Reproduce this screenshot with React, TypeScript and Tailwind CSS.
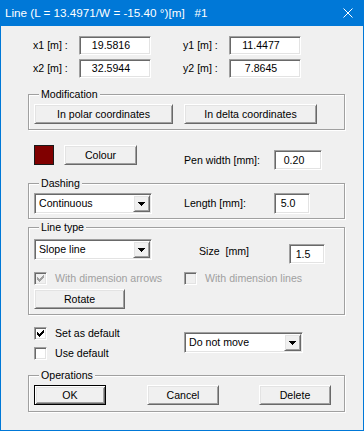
import React from 'react';

const raised =
  'flex items-center justify-center bg-[#f0f0f0] border border-t-white border-l-white border-r-[#696969] border-b-[#696969] shadow-[inset_1px_1px_0_#e3e3e3,inset_-1px_-1px_0_#a0a0a0]';
const sunken =
  'border border-t-[#a0a0a0] border-l-[#a0a0a0] border-r-white border-b-white shadow-[inset_1px_1px_0_#696969,inset_-1px_-1px_0_#e3e3e3]';

function Button({ w, children, isDefault }: { w: string; children: React.ReactNode; isDefault?: boolean }) {
  if (isDefault) {
    return (
      <div
        className={`${w} h-[20px] shrink-0 flex items-center justify-center bg-[#f0f0f0] border border-black shadow-[inset_1px_1px_0_#fff,inset_-1px_-1px_0_#696969,inset_2px_2px_0_#e3e3e3,inset_-2px_-2px_0_#a0a0a0]`}
      >
        {children}
      </div>
    );
  }
  return <div className={`${w} h-[20px] shrink-0 ${raised}`}>{children}</div>;
}

function Field({ w, h = 'h-[20px]', value }: { w: string; h?: string; value: string }) {
  return (
    <div className={`${w} ${h} shrink-0 bg-white flex items-center justify-center pr-[8px] ${sunken}`}>{value}</div>
  );
}

function Combo({ w, value }: { w: string; value: string }) {
  return (
    <div className={`${w} h-[21px] shrink-0 bg-white flex ${sunken}`}>
      <span className="flex-1 flex items-center pl-[4px]">{value}</span>
      <span className={`w-[17px] my-[1px] mr-[1px] ${raised}`}>
        <svg width="7" height="4" viewBox="0 0 7 4" shapeRendering="crispEdges">
          <polygon points="0,0 7,0 3.5,4" fill="#000" />
        </svg>
      </span>
    </div>
  );
}

function Check({ checked, disabled }: { checked?: boolean; disabled?: boolean }) {
  return (
    <span
      className={`w-[13px] h-[13px] shrink-0 flex items-center justify-center ${sunken} ${disabled ? 'bg-[#f0f0f0]' : 'bg-white'}`}
    >
      {checked && (
        <svg width="7" height="7" viewBox="0 0 7 7" shapeRendering="crispEdges" fill={disabled ? '#a0a0a0' : '#000'}>
          <path d="M0 2h1v3H0z M1 3h1v3H1z M2 4h1v3H2z M3 3h1v3H3z M4 2h1v3H4z M5 1h1v3H5z M6 0h1v3H6z" />
        </svg>
      )}
    </span>
  );
}

function Group({ label, className, children }: { label: string; className: string; children: React.ReactNode }) {
  return (
    <div
      className={`relative w-[317px] border border-[#a0a0a0] shadow-[inset_1px_1px_0_#fff,1px_1px_0_#fff] ${className}`}
    >
      <span className="absolute left-[10px] top-[-7px] bg-[#f0f0f0] px-[2px] leading-[13px]">{label}</span>
      {children}
    </div>
  );
}

export default function App() {
  return (
    <div className="w-[364px] h-[431px] flex flex-col bg-[#0078d7] font-['Liberation_Sans',Arial,sans-serif] text-black">
      {/* Title bar */}
      <div className="h-[26px] shrink-0 flex items-center pl-[5px] text-white text-[11.7px]">
        <span className="whitespace-pre">Line (L = 13.4971/W = -15.40 °)[m]   #1</span>
        <svg className="ml-auto mr-[11px]" width="10" height="10" viewBox="0 0 10 10">
          <path d="M0.5 0.5L9.5 9.5M9.5 0.5L0.5 9.5" stroke="#fff" strokeWidth="1" />
        </svg>
      </div>

      {/* Body */}
      <div className="flex-1 mx-[1px] mb-[1px] bg-[#f0f0f0] pl-[27px] pt-[10px] text-[10.6px] leading-[13px]">
        {/* Coordinates */}
        <div className="pl-[5px]">
          <div className="flex items-center">
            <span className="w-[46px]">x1 [m] :</span>
            <Field w="w-[72px]" h="h-[19px]" value="19.5816" />
            <span className="ml-[32px] w-[46px]">y1 [m] :</span>
            <Field w="w-[72px]" h="h-[19px]" value="11.4477" />
          </div>
          <div className="flex items-center mt-[4px]">
            <span className="w-[46px]">x2 [m] :</span>
            <Field w="w-[72px]" h="h-[19px]" value="32.5944" />
            <span className="ml-[32px] w-[46px]">y2 [m] :</span>
            <Field w="w-[72px]" h="h-[19px]" value="7.8645" />
          </div>
        </div>

        {/* Modification */}
        <Group label="Modification" className="mt-[16px] pt-[9px] pb-[5px] pl-[5px]">
          <div className="flex">
            <Button w="w-[139px]">In polar coordinates</Button>
            <Button w="w-[133px] ml-[11px]">In delta coordinates</Button>
          </div>
        </Group>

        {/* Colour / pen width */}
        <div className="flex items-start mt-[15px] pl-[6px]">
          <span className="w-[20px] h-[20px] shrink-0 bg-[#800000] border border-[#1a1a1a]" />
          <Button w="w-[73px] ml-[10px]">Colour</Button>
          <span className="ml-[47px] w-[90px] h-[20px] mt-[5px] flex items-center">Pen width [mm]:</span>
          <div className="mt-[5px]">
            <Field w="w-[48px]" value="0.20" />
          </div>
        </div>

        {/* Dashing */}
        <Group label="Dashing" className="mt-[13px] pt-[9px] pb-[4px] pl-[5px]">
          <div className="flex items-start">
            <Combo w="w-[118px]" value="Continuous" />
            <span className="ml-[32px] w-[90px] h-[21px] flex items-center">Length [mm]:</span>
            <Field w="w-[36px]" h="h-[21px]" value="5.0" />
          </div>
        </Group>

        {/* Line type */}
        <Group label="Line type" className="mt-[8px] pt-[11px] pb-[5px] pl-[5px]">
          <div className="flex items-start">
            <Combo w="w-[118px]" value="Slope line" />
            <span className="ml-[47px] w-[90px] self-center whitespace-pre">Size  [mm]</span>
            <div className="mt-[5px]">
              <Field w="w-[36px]" value="1.5" />
            </div>
          </div>
          <div className="flex items-center mt-[8px] text-[#a0a0a0]">
            <div className="w-[150px] flex items-center">
              <Check checked disabled />
              <span className="ml-[8px]">With dimension arrows</span>
            </div>
            <Check disabled />
            <span className="ml-[8px]">With dimension lines</span>
          </div>
          <div className="mt-[4px]">
            <Button w="w-[91px]">Rotate</Button>
          </div>
        </Group>

        {/* Defaults */}
        <div className="flex items-start mt-[12px] pl-[6px]">
          <div className="w-[150px] flex flex-col gap-[7px]">
            <div className="flex items-center h-[13px]">
              <Check checked />
              <span className="ml-[8px]">Set as default</span>
            </div>
            <div className="flex items-center h-[13px]">
              <Check />
              <span className="ml-[8px]">Use default</span>
            </div>
          </div>
          <div className="mt-[5px]">
            <Combo w="w-[119px]" value="Do not move" />
          </div>
        </div>

        {/* Operations */}
        <Group label="Operations" className="mt-[15px] pt-[9px] pb-[6px] pl-[5px]">
          <div className="flex">
            <Button w="w-[72px]" isDefault>
              OK
            </Button>
            <Button w="w-[72px] ml-[41px]">Cancel</Button>
            <Button w="w-[72px] ml-[40px]">Delete</Button>
          </div>
        </Group>
      </div>
    </div>
  );
}
